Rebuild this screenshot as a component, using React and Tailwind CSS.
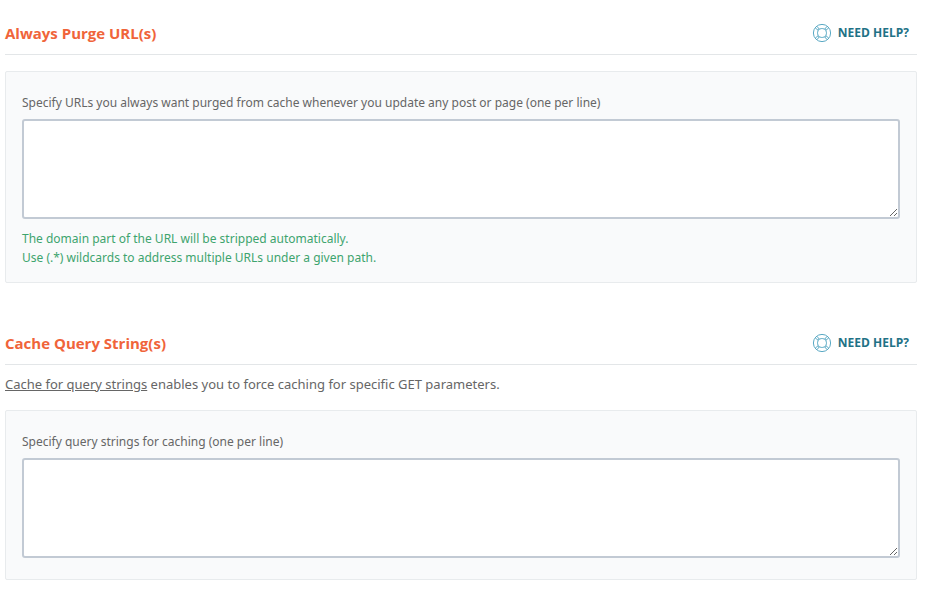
import React from 'react';

const LifebuoyIcon = () => (
  <svg
    className="w-5 h-5 shrink-0"
    viewBox="0 0 20 20"
    fill="none"
    stroke="#5aa9c4"
    strokeWidth="1"
    aria-hidden="true"
  >
    <circle cx="10" cy="10" r="8.6" />
    <rect x="5.6" y="5.6" width="8.8" height="8.8" rx="3.6" />
    <path d="M3.4 5 6 7.2M5 3.4 7.2 6M16.6 5 14 7.2M15 3.4 12.8 6M3.4 15 6 12.8M5 16.6 7.2 14M16.6 15 14 12.8M15 16.6 12.8 14" />
  </svg>
);

const SectionHeader = ({ title }) => (
  <header className="flex items-center justify-between h-[42px] pr-2 pb-0.5 border-b border-[#e3e6e8]">
    <h2 className="text-[15px] leading-5 font-bold text-[#f0643a]">{title}</h2>
    <a href="#help" className="flex items-center gap-1.5 text-[12px] leading-5 font-bold text-[#1f7286]">
      <LifebuoyIcon />
      NEED HELP?
    </a>
  </header>
);

const UrlField = ({ id, label, children }) => (
  <div className="mt-4 px-4 pt-5 pb-[15px] bg-[#f9fafb] border border-[#e8ebed] rounded-xs">
    <label htmlFor={id} className="block mb-[5px] text-[12px] leading-[22px] text-[#666666] font-['Noto_Sans',sans-serif]">
      {label}
    </label>
    <textarea
      id={id}
      className="block w-full h-[100px] mb-[6px] p-2 bg-white border-2 border-[#c2cad4] rounded-[3px] text-[12px] resize-y outline-none focus:border-[#1f7286]"
    />
    {children}
  </div>
);

const App = () => {
  return (
    <main className="flex flex-col gap-10 pt-[13px] pb-5 pl-[5px] pr-3 bg-white font-['Open_Sans','Noto_Sans',sans-serif]">
      {/* Always purge */}
      <section>
        <SectionHeader title="Always Purge URL(s)" />
        <UrlField
          id="purge-urls"
          label="Specify URLs you always want purged from cache whenever you update any post or page (one per line)"
        >
          <p className="pt-1 text-[12px] leading-[19px] text-[#3ea46e] font-['Noto_Sans',sans-serif]">
            The domain part of the URL will be stripped automatically.
            <br />
            Use (.*) wildcards to address multiple URLs under a given path.
          </p>
        </UrlField>
      </section>

      {/* Query strings */}
      <section>
        <SectionHeader title="Cache Query String(s)" />
        <p className="mt-[9px] text-[13px] leading-5 text-[#666666] font-['Noto_Sans',sans-serif]">
          <a href="#query-strings" className="underline">Cache for query strings</a> enables you to force caching for specific GET parameters.
        </p>
        <UrlField id="query-strings" label="Specify query strings for caching (one per line)" />
      </section>
    </main>
  );
};

export default App;
